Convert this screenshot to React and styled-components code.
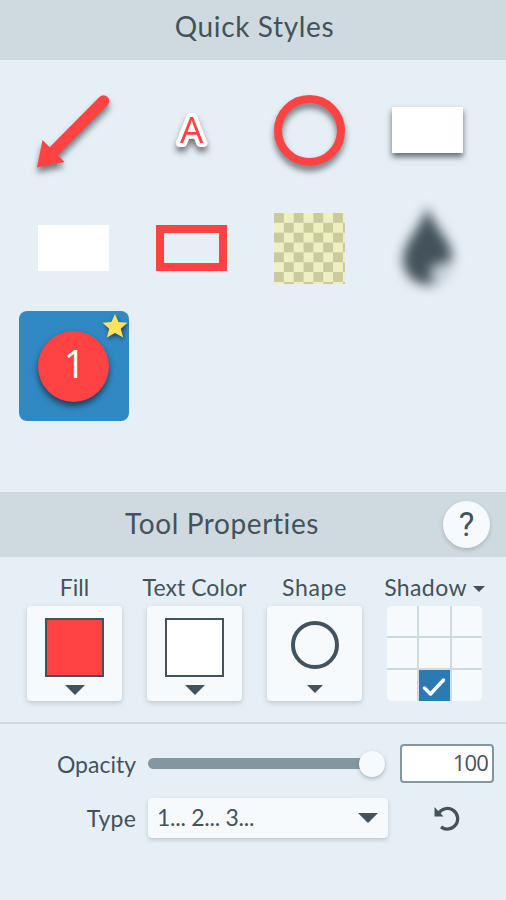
import React from "react";
import styled, { createGlobalStyle } from "styled-components";

const c = {
  page: "#e7eff6",
  header: "#cfdae0",
  ink: "#43525b",
  card: "#f6fafd",
  red: "#ff4242",
  blue: "#3189c4",
  line: "#cfdae0",
};

const GlobalStyle = createGlobalStyle`
  * { box-sizing: border-box; }
  body { margin: 0; background: ${c.page}; }
`;

const Panel = styled.main`
  width: 506px;
  height: 900px;
  display: flex;
  flex-direction: column;
  overflow: hidden;
  background: ${c.page};
  color: ${c.ink};
  font-family: Lato, "Open Sans", sans-serif;
  font-size: 23px;
`;

const Header = styled.header`
  display: grid;
  grid-template-columns: 70px 1fr 70px;
  align-items: center;
  flex: none;
  height: ${(p) => p.$height}px;
  padding-bottom: ${(p) => p.$lift || 0}px;
  background: ${c.header};
`;

const Title = styled.h2`
  grid-column: 2;
  margin: 0 ${(p) => p.$shift || 0}px 3px 0;
  font-size: 28px;
  font-weight: 400;
  line-height: 34px;
  letter-spacing: ${(p) => p.$track}px;
  text-align: center;
  white-space: nowrap;
`;

const HelpButton = styled.button`
  width: 47px;
  height: 47px;
  margin-left: 7px;
  padding: 0;
  border: 0;
  border-radius: 50%;
  background: ${c.card};
  color: ${c.ink};
  box-shadow: 0 2px 4px rgba(67, 82, 91, 0.28);
  font: 400 33px/48px Roboto, sans-serif;
`;

const StyleGrid = styled.section`
  display: grid;
  grid-template-columns: repeat(4, 118px);
  grid-auto-rows: 118px;
  flex: none;
  height: 432.5px;
  padding: 11.9px 0 0 14.5px;
`;

const StyleCell = styled.div`
  display: grid;
  place-items: center;
`;

const Art = styled.svg`
  display: block;
  overflow: visible;
  filter: ${(p) => (p.$shadow ? "drop-shadow(0 5px 3px rgba(30,38,43,.6))" : "none")};
`;

const Letter = styled.text`
  font: 400 37px "Open Sans", sans-serif;
  text-anchor: middle;
  fill: ${c.red};
  stroke: #fff;
  stroke-width: 8px;
  stroke-linejoin: round;
  paint-order: stroke;
`;

const Swatch = styled.div`
  width: 71px;
  height: 46px;
  background: ${(p) => (p.$outlined ? "transparent" : "#fff")};
  border: ${(p) => (p.$outlined ? `8px solid ${c.red}` : "0")};
  box-shadow: ${(p) => (p.$shadow ? "0 4px 6px rgba(30,38,43,.65)" : "none")};
`;

const Checker = styled.div`
  width: 71px;
  height: 71px;
  background: repeating-conic-gradient(#eef0c2 0 25%, #c9cb9c 0 50%) 0 0 / 19.7px 19.7px;
`;

const Selected = styled.div`
  position: relative;
  display: grid;
  place-items: center;
  width: 110px;
  height: 110px;
  border-radius: 8px;
  background: ${c.blue};
`;

const StepBadge = styled.div`
  width: 71px;
  height: 71px;
  padding-left: 2px;
  border-radius: 50%;
  background: ${c.red};
  color: #fff;
  font: 500 38px/65px "Open Sans", sans-serif;
  text-align: center;
  box-shadow: 0 4px 6px rgba(20, 30, 40, 0.7);
`;

const Star = styled.svg`
  position: absolute;
  top: 2px;
  right: 0;
  filter: drop-shadow(1px 2px 2px rgba(20, 30, 40, 0.7));
`;

const Tools = styled.section`
  display: grid;
  grid-template-columns: repeat(4, 95px);
  column-gap: 25px;
  flex: none;
  height: 167.5px;
  padding: 16px 0 0 27px;
  border-bottom: 2px solid ${c.line};
`;

const Tool = styled.div`
  display: flex;
  flex-direction: column;
  align-items: center;
`;

const Caption = styled.div`
  display: flex;
  align-items: center;
  flex: none;
  gap: 6px;
  height: 33px;
  padding-bottom: 4px;
  line-height: 26px;
  letter-spacing: ${(p) => p.$track || 0}px;
  white-space: nowrap;

  svg {
    margin-top: 3px;
  }
`;

const ToolCard = styled.button`
  display: flex;
  flex-direction: column;
  align-items: center;
  flex: none;
  gap: ${(p) => p.$gap}px;
  width: 95px;
  height: 95px;
  padding: ${(p) => p.$top}px 0 0;
  border: 0;
  border-radius: 4px;
  background: ${c.card};
  box-shadow: 0 2px 5px rgba(67, 82, 91, 0.25);
`;

const ColorBox = styled.span`
  width: 59px;
  height: 59px;
  border: 2px solid ${c.ink};
  background: ${(p) => p.$color};
`;

const Ring = styled.span`
  width: 48px;
  height: 48px;
  border: 4px solid ${c.ink};
  border-radius: 50%;
`;

const ShadowGrid = styled.div`
  display: grid;
  grid-template-columns: repeat(3, 1fr);
  grid-template-rows: repeat(3, 1fr);
  gap: 2px;
  width: 95px;
  height: 95px;
  border-radius: 4px;
  overflow: hidden;
  background: ${c.line};
`;

const ShadowCell = styled.span`
  display: grid;
  place-items: center;
  background: ${(p) => (p.$on ? "#2b7ab2" : c.card)};
`;

const CheckMark = styled.svg`
  margin-top: 3px;
`;

const Settings = styled.section`
  display: grid;
  grid-template-columns: 136px 240px 94px;
  grid-template-rows: 39px 40px;
  gap: 15px 12px;
  padding-top: 20px;
  align-items: center;
`;

const FieldName = styled.label`
  line-height: 30px;
  text-align: right;
  letter-spacing: ${(p) => p.$track}px;
`;

const Slider = styled.div`
  display: flex;
  align-items: center;
  justify-content: flex-end;
  width: 238px;
  height: 11px;
  padding-right: 1px;
  border-radius: 6px;
  background: linear-gradient(90deg, #8397a1 228px, #dae2e8 228px);
`;

const Thumb = styled.span`
  width: 26px;
  height: 26px;
  border-radius: 50%;
  background: ${c.card};
  box-shadow: 0 2px 4px rgba(67, 82, 91, 0.35);
`;

const NumberField = styled.div`
  height: 39px;
  padding-right: 4px;
  border: 2px solid #82979f;
  border-radius: 4px;
  background: #fff;
  font: 400 22px/33px "Open Sans", sans-serif;
  letter-spacing: -0.8px;
  text-align: right;
`;

const Select = styled.div`
  display: flex;
  align-items: center;
  justify-content: space-between;
  height: 40px;
  padding: 0 10px 0 9px;
  border-radius: 4px;
  background: ${c.card};
  box-shadow: 0 2px 4px rgba(67, 82, 91, 0.25);
  letter-spacing: -0.25px;
`;

const SelectValue = styled.span`
  line-height: 26px;
  padding-bottom: 2px;
`;

const ResetIcon = styled.svg`
  justify-self: center;
`;

const Caret = ({ w = 20, h = 10 }) => (
  <svg width={w} height={h} viewBox="0 0 20 10" preserveAspectRatio="none">
    <path d="M0 0H20L10 10Z" fill={c.ink} />
  </svg>
);

export default function App() {
  return (
    <Panel>
      <GlobalStyle />
      <Header $height={59.5} $lift={4}>
        <Title $track={0.65} $shift={-3}>Quick Styles</Title>
      </Header>
      <StyleGrid>
        <StyleCell>
          <Art $shadow width="73" height="73" viewBox="0 0 73 73">
            <path d="M66.5 7 18 56" stroke={c.red} strokeWidth="11.5" strokeLinecap="round" />
            <path d="M0 73.5 5.5 46 27.5 68Z" fill={c.red} />
          </Art>
        </StyleCell>
        <StyleCell>
          <Art $shadow width="40" height="40" viewBox="0 0 40 40">
            <Letter x="19.6" y="33">A</Letter>
          </Art>
        </StyleCell>
        <StyleCell>
          <Art $shadow width="71" height="71" viewBox="0 0 71 71">
            <circle cx="35.5" cy="35.5" r="31.5" fill="none" stroke={c.red} strokeWidth="8" />
          </Art>
        </StyleCell>
        <StyleCell><Swatch $shadow /></StyleCell>
        <StyleCell><Swatch /></StyleCell>
        <StyleCell><Swatch $outlined /></StyleCell>
        <StyleCell><Checker /></StyleCell>
        <StyleCell>
          <svg width="90" height="100" viewBox="0 0 90 100">
            <defs>
              <filter id="soften" x="-40%" y="-40%" width="180%" height="180%" colorInterpolationFilters="sRGB">
                <feGaussianBlur stdDeviation="6" />
              </filter>
            </defs>
            <g filter="url(#soften)">
              <path d="M44 8C40 28 20 43 20 62a25 25 0 0 0 50 0C70 43 50 28 44 8Z" fill={c.ink} />
              <path d="M71 60C70 74 62 83 52 85Q43 76 50 67Q59 66 71 60Z" fill="#c3ced6" />
            </g>
          </svg>
        </StyleCell>
        <StyleCell>
          <Selected>
            <StepBadge>1</StepBadge>
            <Star width="27" height="27" viewBox="0 0 27 27">
              <path d="M13 1 16.6 9 25.4 9.8 18.8 15.8 21.2 24.5 13 20 4.8 24.5 7.2 15.8 .6 9.8 9.4 9Z" fill="#ffe35a" />
            </Star>
          </Selected>
        </StyleCell>
      </StyleGrid>
      <Header $height={64.5}>
        <Title $track={0.6} $shift={62}>Tool Properties</Title>
        <HelpButton>?</HelpButton>
      </Header>
      <Tools>
        <Tool>
          <Caption>Fill</Caption>
          <ToolCard $top={12} $gap={8}><ColorBox $color={c.red} /><Caret /></ToolCard>
        </Tool>
        <Tool>
          <Caption $track={0.05}>Text Color</Caption>
          <ToolCard $top={12} $gap={8}><ColorBox $color="#fff" /><Caret /></ToolCard>
        </Tool>
        <Tool>
          <Caption $track={0.7}>Shape</Caption>
          <ToolCard $top={15} $gap={16}><Ring /><Caret w={16} h={8} /></ToolCard>
        </Tool>
        <Tool>
          <Caption $track={0.4}>Shadow<Caret w={12} h={6} /></Caption>
          <ShadowGrid>
            {Array.from({ length: 9 }, (_, i) => (
              <ShadowCell key={i} $on={i === 7}>
                {i === 7 && (
                  <CheckMark width="24" height="20" viewBox="0 0 24 20">
                    <path d="M2.5 11 8.5 17 21.5 3" fill="none" stroke="#fff" strokeWidth="3.5" strokeLinecap="round" strokeLinejoin="round" />
                  </CheckMark>
                )}
              </ShadowCell>
            ))}
          </ShadowGrid>
        </Tool>
      </Tools>
      <Settings>
        <FieldName $track={0}>Opacity</FieldName>
        <Slider><Thumb /></Slider>
        <NumberField>100</NumberField>
        <FieldName $track={0.2}>Type</FieldName>
        <Select><SelectValue>1... 2... 3...</SelectValue><Caret /></Select>
        <ResetIcon width="26" height="26" viewBox="0 0 26 26">
          <path d="M4.5 8.5A10.3 10.3 0 1 1 7 21.9" fill="none" stroke={c.ink} strokeWidth="3.3" />
          <path d="M.5 2V11.5H9.5Z" fill={c.ink} />
        </ResetIcon>
      </Settings>
    </Panel>
  );
}
